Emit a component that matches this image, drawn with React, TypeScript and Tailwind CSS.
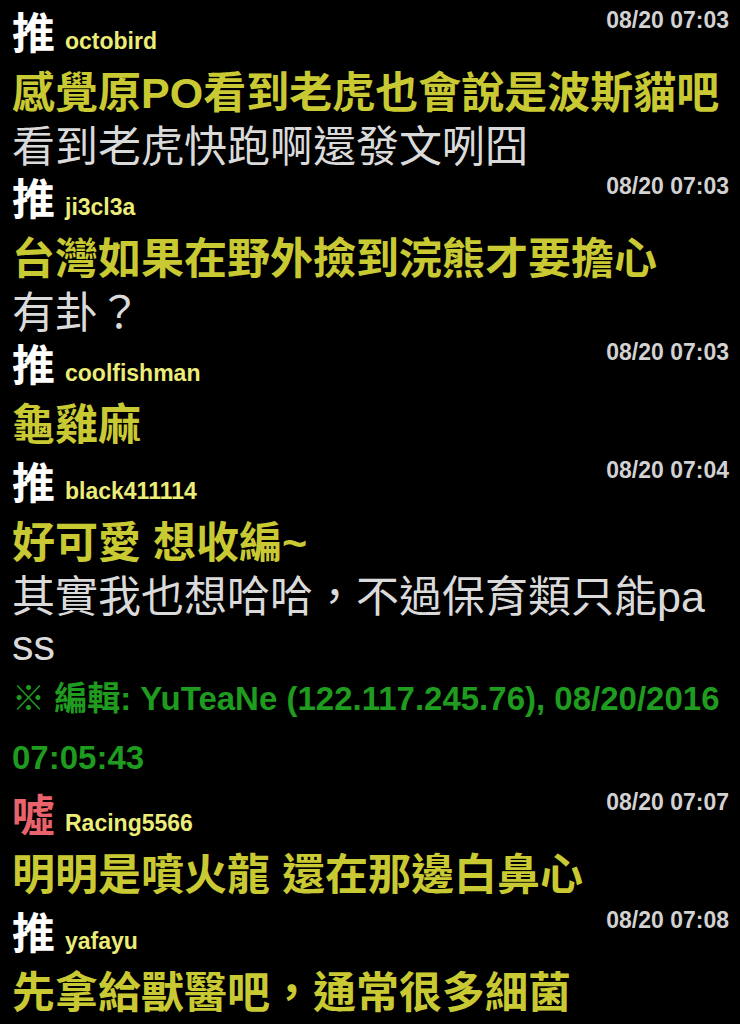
type Line = { text: string; kind: "say" | "more" | "edit" };

type Comment = {
  tag: "推" | "噓";
  user: string;
  time: string;
  lines: Line[];
};

const comments: Comment[] = [
  {
    tag: "推",
    user: "octobird",
    time: "08/20 07:03",
    lines: [
      { text: "感覺原PO看到老虎也會說是波斯貓吧", kind: "say" },
      { text: "看到老虎快跑啊還發文咧囧", kind: "more" },
    ],
  },
  {
    tag: "推",
    user: "ji3cl3a",
    time: "08/20 07:03",
    lines: [
      { text: "台灣如果在野外撿到浣熊才要擔心", kind: "say" },
      { text: "有卦？", kind: "more" },
    ],
  },
  {
    tag: "推",
    user: "coolfishman",
    time: "08/20 07:03",
    lines: [{ text: "龜雞麻", kind: "say" }],
  },
  {
    tag: "推",
    user: "black411114",
    time: "08/20 07:04",
    lines: [
      { text: "好可愛 想收編~", kind: "say" },
      { text: "其實我也想哈哈，不過保育類只能pa", kind: "more" },
      { text: "ss", kind: "more" },
      { text: "※ 編輯: YuTeaNe (122.117.245.76), 08/20/2016", kind: "edit" },
      { text: "07:05:43", kind: "edit" },
    ],
  },
  {
    tag: "噓",
    user: "Racing5566",
    time: "08/20 07:07",
    lines: [{ text: "明明是噴火龍 還在那邊白鼻心", kind: "say" }],
  },
  {
    tag: "推",
    user: "yafayu",
    time: "08/20 07:08",
    lines: [{ text: "先拿給獸醫吧，通常很多細菌", kind: "say" }],
  },
];

const lineClass = {
  say: "text-[43px] leading-[60px] font-bold text-[#c9c933]",
  more: "text-[43px] leading-[48px] font-normal text-[#dadada]",
  edit: "text-[33px] leading-[59px] font-bold text-[#1f9b1f]",
};

const Row = ({ c }: { c: Comment }) => {
  return (
    <div>
      <div className="flex justify-between items-start h-[58px]">
        <div className="flex items-baseline gap-[10px]">
          <span
            className={
              c.tag === "推"
                ? "text-[43px] leading-[58px] font-bold text-white"
                : "text-[43px] leading-[58px] font-bold text-[#e8636b]"
            }
          >
            {c.tag}
          </span>
          <span className="text-[23px] font-bold text-[#ecec78]">{c.user}</span>
        </div>
        <span className="text-[23px] leading-none mt-[4px] font-bold text-[#d2d2d2]">{c.time}</span>
      </div>
      {c.lines.map((l, i) => (
        <div key={i} className={"whitespace-nowrap " + lineClass[l.kind]}>
          {l.text}
        </div>
      ))}
    </div>
  );
};

export default function App() {
  return (
    <div
      className="w-[740px] h-[1024px] overflow-hidden bg-black pl-[12px] pr-[11px] pt-[5px]"
      style={{ fontFamily: '"Liberation Sans", "Noto Sans CJK TC", sans-serif' }}
    >
      {comments.map((c, i) => (
        <Row key={i} c={c} />
      ))}
    </div>
  );
}
